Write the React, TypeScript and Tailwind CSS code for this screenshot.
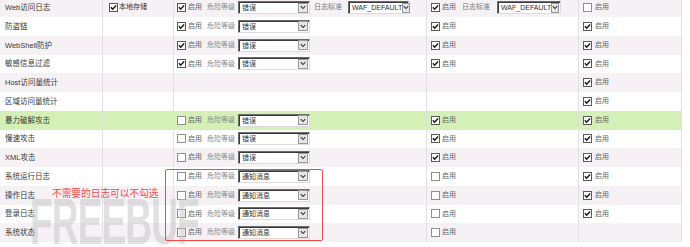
import React from 'react';

type C3 = { on: boolean; level: string; std?: boolean } | null;
type C4 = { on: boolean; std?: boolean } | null;

type Row = {
  name: string;
  local?: boolean;
  c3: C3;
  c4: C4;
  c5: boolean | null;
  hl?: boolean;
};

const rows: Row[] = [
  { name: 'Web访问日志', local: true, c3: { on: true, level: '错误', std: true }, c4: { on: true, std: true }, c5: false },
  { name: '防盗链', c3: { on: true, level: '错误' }, c4: { on: true }, c5: true },
  { name: 'WebShell防护', c3: { on: true, level: '错误' }, c4: { on: true }, c5: true },
  { name: '敏感信息过滤', c3: { on: true, level: '错误' }, c4: { on: true }, c5: true },
  { name: 'Host访问量统计', c3: null, c4: null, c5: true },
  { name: '区域访问量统计', c3: null, c4: null, c5: true },
  { name: '暴力破解攻击', c3: { on: false, level: '错误' }, c4: { on: true }, c5: true, hl: true },
  { name: '慢速攻击', c3: { on: false, level: '错误' }, c4: { on: true }, c5: true },
  { name: 'XML攻击', c3: { on: false, level: '错误' }, c4: { on: true }, c5: true },
  { name: '系统运行日志', c3: { on: false, level: '通知消息' }, c4: { on: false }, c5: true },
  { name: '操作日志', c3: { on: false, level: '通知消息' }, c4: { on: false }, c5: true },
  { name: '登录日志', c3: { on: false, level: '通知消息' }, c4: { on: false }, c5: true },
  { name: '系统状态', c3: { on: false, level: '通知消息' }, c4: { on: false }, c5: null },
];

function Box({ checked }: { checked: boolean }) {
  return (
    <span
      className={`inline-flex h-[9px] w-[9px] shrink-0 items-center justify-center border bg-white ${
        checked ? 'border-[#5a5a5a]' : 'border-[#8f8f8f]'
      }`}
    >
      {checked && (
        <svg viewBox="0 0 8 8" className="h-[7px] w-[7px]">
          <path d="M1 3.8 L3 6 L7 1.6" stroke="#1a1a1a" strokeWidth="1.7" fill="none" />
        </svg>
      )}
    </span>
  );
}

function Select({ value, w }: { value: string; w: string }) {
  return (
    <span
      className={`flex h-[13px] shrink-0 items-center justify-between border border-t-[#6d6d6d] border-l-[#6d6d6d] border-b-[#dcdcdc] border-r-[#dcdcdc] bg-white shadow-[inset_1px_1px_0_#3a3a3a] ${w}`}
    >
      <span className="pl-[3px] text-[7px] leading-none text-[#333]">{value}</span>
      <span className="mr-[1px] flex h-[10px] w-[10px] items-center justify-center border border-[#9a9a9a] bg-[#e6e6e6]">
        <svg viewBox="0 0 8 6" className="h-[5px] w-[6px]">
          <path d="M1 1.2 L4 4.4 L7 1.2" stroke="#333" strokeWidth="1.4" fill="none" />
        </svg>
      </span>
    </span>
  );
}

export default function App() {
  return (
    <div className="relative h-[247px] w-[690px] overflow-hidden bg-white font-['Liberation_Sans','Noto_Sans_CJK_SC',sans-serif]">
      <div className="mt-[-1.75px] w-[682px]">
        {rows.map((r, i) => {
          const bg = r.hl ? 'bg-[#d4f0b6]' : i % 2 === 0 ? 'bg-[#f5f1f5]' : 'bg-white';
          return (
            <div key={r.name} className={`grid h-[18.75px] grid-cols-[103px_71px_253px_152px_103px] ${bg}`}>
              <div className="flex items-center border-r border-[#e3e0e3] pl-[5px] text-[7.5px] text-[#3a3a3a]">
                {r.name}
              </div>
              <div className="flex items-center border-r border-[#e3e0e3] pl-[6px]">
                {r.local && (
                  <>
                    <Box checked />
                    <span className="ml-[1px] text-[7px] text-[#333]">本地存储</span>
                  </>
                )}
              </div>
              <div className="flex items-center overflow-hidden border-r border-[#e3e0e3] pl-[3px]">
                {r.c3 && (
                  <>
                    <Box checked={r.c3.on} />
                    <span className="ml-[2px] text-[7px] text-[#666]">启用</span>
                    <span className="ml-[5px] text-[7px] text-[#8a8a8a]">危险等级</span>
                    <Select value={r.c3.level} w="ml-[3px] w-[72px]" />
                    {r.c3.std && (
                      <>
                        <span className="ml-[4px] text-[7px] text-[#777]">日志标准</span>
                        <Select value="WAF_DEFAULT" w="ml-[6px] w-[61px]" />
                      </>
                    )}
                  </>
                )}
              </div>
              <div className="flex items-center border-r border-[#e3e0e3] pl-[4px]">
                {r.c4 && (
                  <>
                    <Box checked={r.c4.on} />
                    <span className="ml-[2px] text-[7px] text-[#666]">启用</span>
                    {r.c4.std && (
                      <>
                        <span className="ml-[6px] text-[7px] text-[#777]">日志标准</span>
                        <Select value="WAF_DEFAULT" w="ml-[7px] w-[64px]" />
                      </>
                    )}
                  </>
                )}
              </div>
              <div className="flex items-center border-r border-[#e3e0e3] pl-[4px]">
                {r.c5 !== null && (
                  <>
                    <Box checked={r.c5} />
                    <span className="ml-[3px] text-[7px] text-[#666]">启用</span>
                  </>
                )}
              </div>
            </div>
          );
        })}
      </div>

      {/* watermark */}
      <div className="pointer-events-none absolute left-[30px] top-[190px] origin-left scale-x-[0.58] text-[64px] font-bold leading-none tracking-tight text-[#c4c4c4] opacity-50">
        FREEBUF
      </div>

      {/* annotation */}
      <div className="pointer-events-none absolute left-[165px] top-[169px] h-[72px] w-[158px] rounded-[2px] border-[1.5px] border-[#ee4a4a]" />
      <div className="absolute left-[52px] top-[189px] text-[9.7px] leading-none text-[#ee4a4a]">
        不需要的日志可以不勾选
      </div>
    </div>
  );
}
